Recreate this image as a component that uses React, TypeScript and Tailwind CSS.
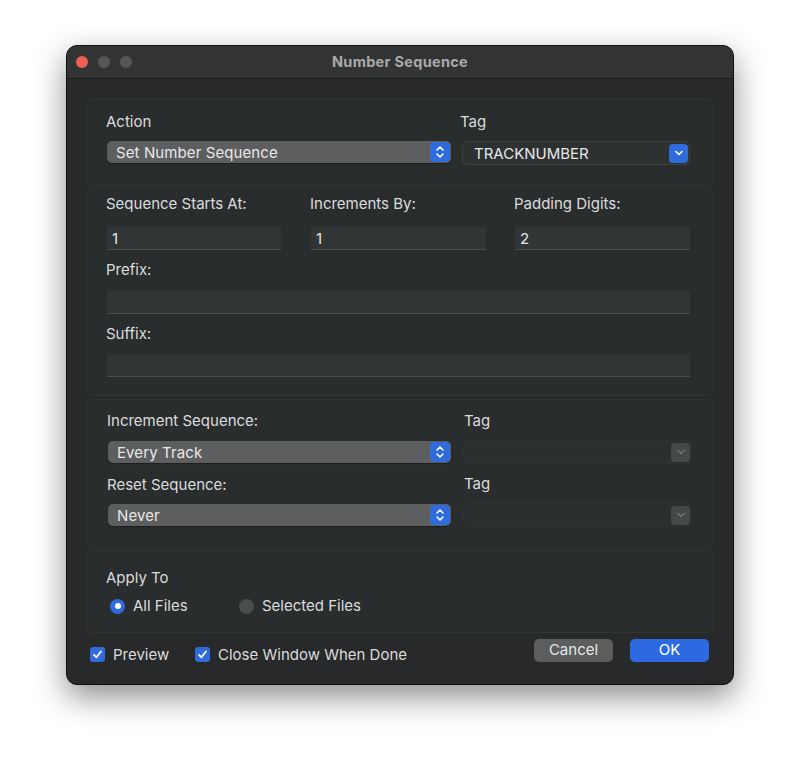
import React from "react";

const font = { fontFamily: "Inter, 'Liberation Sans', sans-serif" };

function Stepper() {
  return (
    <div className="w-[20px] h-[20px] rounded-[4px] bg-[#2f6bdb] flex items-center justify-center shrink-0">
      <svg width="10" height="14" viewBox="0 0 10 14" fill="none" stroke="white" strokeWidth="1.6" strokeLinecap="round" strokeLinejoin="round">
        <path d="M2 5 L5 2 L8 5" />
        <path d="M2 9 L5 12 L8 9" />
      </svg>
    </div>
  );
}

function Chevron({ color }: { color: string }) {
  return (
    <svg width="10" height="8" viewBox="0 0 10 8" fill="none" stroke={color} strokeWidth="1.6" strokeLinecap="round" strokeLinejoin="round">
      <path d="M2 2.5 L5 5.5 L8 2.5" />
    </svg>
  );
}

function Popup({ text, width }: { text: string; width: string }) {
  return (
    <div className={`${width} h-[22px] rounded-[5px] bg-[#5c5e5f] flex items-center justify-between pl-[9px] pr-[1px] shadow-[0_1px_1px_rgba(0,0,0,0.35)]`}>
      <span className="text-[15px] text-[#e8e8e8] tracking-[0.1px] leading-none">{text}</span>
      <Stepper />
    </div>
  );
}

function TagPopup({ text, disabled, width }: { text?: string; disabled?: boolean; width: string }) {
  return (
    <div
      className={`${width} h-[24px] rounded-[5px] flex items-center justify-between pl-[11px] pr-[1px] ${
        disabled ? "bg-[#2c2f30] border border-[#303334]" : "bg-[#2e3132] border border-[#3e4142]"
      }`}
    >
      <span className="text-[15px] text-[#e8e8e8] leading-none">{text ?? ""}</span>
      <div
        className={`w-[19px] h-[19px] rounded-[4px] flex items-center justify-center ${
          disabled ? "bg-[#46494a]" : "bg-[#2f6bdb]"
        }`}
      >
        <Chevron color={disabled ? "#707374" : "white"} />
      </div>
    </div>
  );
}

function Field({ value, width }: { value?: string; width: string }) {
  return (
    <div className={`${width} h-[24px] bg-[#323536] border-b border-[#4b4e4f] border-t border-t-[#2c2e2f] flex items-center pl-[5px]`}>
      <span className="text-[15px] text-[#e6e6e6] leading-none">{value ?? ""}</span>
    </div>
  );
}

function Label({ children, className = "" }: { children: React.ReactNode; className?: string }) {
  return <div className={`text-[15px] leading-[18px] text-[#dcdcdc] ${className}`}>{children}</div>;
}

function Group({ className, children }: { className: string; children: React.ReactNode }) {
  return (
    <div className={`w-[628px] rounded-[7px] bg-[#2a2d2e] border border-[#323536] ${className}`}>{children}</div>
  );
}

function Check() {
  return (
    <div className="w-[15px] h-[15px] rounded-[3px] bg-[#2f6bdb] flex items-center justify-center">
      <svg width="11" height="11" viewBox="0 0 11 11" fill="none" stroke="white" strokeWidth="1.8" strokeLinecap="round" strokeLinejoin="round">
        <path d="M2 5.8 L4.4 8.3 L9 2.5" />
      </svg>
    </div>
  );
}

export default function App() {
  return (
    <div className="w-[800px] h-[772px] bg-white relative" style={font}>
      <div className="absolute left-[66px] top-[45px] w-[668px] h-[640px] rounded-[11px] overflow-hidden bg-[#27292a] border border-[#111] shadow-[0_12px_32px_rgba(0,0,0,0.45)] flex flex-col">
        {/* Title bar */}
        <div className="h-[33px] bg-[#323333] border-b border-[#1b1c1c] flex items-center relative shrink-0">
          <div className="flex gap-[10px] pl-[9px]">
            <div className="w-[12px] h-[12px] rounded-full bg-[#ee5e58]" />
            <div className="w-[12px] h-[12px] rounded-full bg-[#555657]" />
            <div className="w-[12px] h-[12px] rounded-full bg-[#555657]" />
          </div>
          <div className="absolute inset-0 flex items-center justify-center pointer-events-none">
            <span className="text-[14.5px] font-bold text-[#aaaaaa] tracking-[0.3px] -mt-[1px]">Number Sequence</span>
          </div>
        </div>

        {/* Body */}
        <div className="flex flex-col pl-[19px] pt-[19px]">
          {/* Group 1 */}
          <Group className="h-[88px] pl-[19px] pt-[14px]">
            <div className="flex">
              <div className="w-[354px]">
                <Label>Action</Label>
                <div className="mt-[10px] pl-[1px]">
                  <Popup text="Set Number Sequence" width="w-[344px]" />
                </div>
              </div>
              <div>
                <Label>Tag</Label>
                <div className="mt-[10px] pl-[2px]">
                  <TagPopup text="TRACKNUMBER" width="w-[228px]" />
                </div>
              </div>
            </div>
          </Group>

          {/* Group 2 */}
          <Group className="h-[209px] mt-[1px] pl-[19px] pt-[7px]">
            <div className="flex">
              <div className="w-[204px]">
                <Label>Sequence Starts At:</Label>
                <div className="mt-[13px] pl-[1px]">
                  <Field value="1" width="w-[174px]" />
                </div>
              </div>
              <div className="w-[204px]">
                <Label>Increments By:</Label>
                <div className="mt-[13px] pl-[1px]">
                  <Field value="1" width="w-[175px]" />
                </div>
              </div>
              <div>
                <Label>Padding Digits:</Label>
                <div className="mt-[13px] pl-[1px]">
                  <Field value="2" width="w-[175px]" />
                </div>
              </div>
            </div>
            <Label className="mt-[11px]">Prefix:</Label>
            <div className="mt-[11px] pl-[1px]">
              <Field width="w-[583px]" />
            </div>
            <Label className="mt-[11px]">Suffix:</Label>
            <div className="mt-[10px] pl-[1px]">
              <Field width="w-[583px]" />
            </div>
          </Group>

          {/* Group 3 */}
          <Group className="h-[150px] mt-[3px] pl-[20px] pt-[12px]">
            <div className="flex">
              <div className="w-[357px]">
                <Label>Increment Sequence:</Label>
                <div className="mt-[11px] pl-[1px]">
                  <Popup text="Every Track" width="w-[343px]" />
                </div>
                <Label className="mt-[13px]">Reset Sequence:</Label>
                <div className="mt-[10px] pl-[1px]">
                  <Popup text="Never" width="w-[343px]" />
                </div>
              </div>
              <div>
                <Label>Tag</Label>
                <div className="mt-[10px] -ml-[1px]">
                  <TagPopup disabled width="w-[229px]" />
                </div>
                <Label className="mt-[11px]">Tag</Label>
                <div className="mt-[10px] -ml-[1px]">
                  <TagPopup disabled width="w-[229px]" />
                </div>
              </div>
            </div>
          </Group>

          {/* Group 4 */}
          <Group className="h-[83px] mt-[1px] pl-[19px] pt-[18px]">
            <Label>Apply To</Label>
            <div className="flex items-center mt-[8px] pl-[4px]">
              <div className="w-[15px] h-[15px] rounded-full bg-[#2f6bdb] flex items-center justify-center">
                <div className="w-[6px] h-[6px] rounded-full bg-white" />
              </div>
              <span className="text-[15px] text-[#dcdcdc] ml-[8px] w-[106px]">All Files</span>
              <div className="w-[15px] h-[15px] rounded-full bg-[#4b4e4f]" />
              <span className="text-[15px] text-[#dcdcdc] ml-[8px]">Selected Files</span>
            </div>
          </Group>

          {/* Bottom row */}
          <div className="flex items-start w-[628px] pl-[4px] pr-[5px]">
            <div className="flex items-center mt-[14px]">
              <Check />
              <span className="text-[15px] text-[#dcdcdc] ml-[8px] w-[82px] leading-[15px]">Preview</span>
              <Check />
              <span className="text-[15px] text-[#dcdcdc] ml-[8px] leading-[15px]">Close Window When Done</span>
            </div>
            <div className="ml-auto flex gap-[17px] mt-[6px]">
              <div className="w-[79px] h-[23px] rounded-[5px] bg-[#5b5d5e] flex items-center justify-center text-[15px] text-[#e6e6e6]">
                Cancel
              </div>
              <div className="w-[79px] h-[23px] rounded-[5px] bg-[#2d6ae2] flex items-center justify-center text-[15px] text-white">
                OK
              </div>
            </div>
          </div>
        </div>
      </div>
    </div>
  );
}
